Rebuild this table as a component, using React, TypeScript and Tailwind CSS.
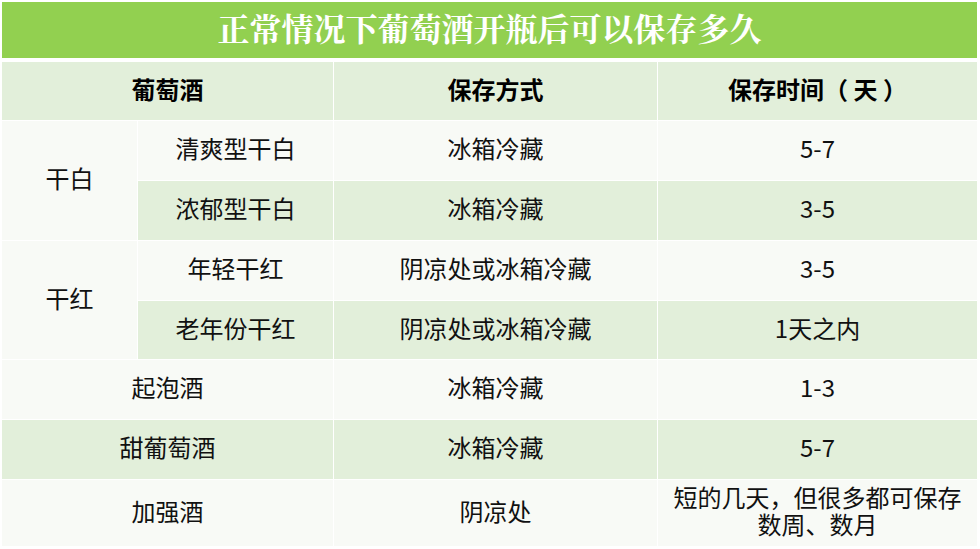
const body = "font-['Noto_Sans_CJK_SC',sans-serif]"

const cell = 'flex items-center justify-center text-center text-[24px] text-[#111] pb-[5px]'
const light = 'bg-[#f8faf6]'
const green = 'bg-[#e2efda]'

export default function App() {
  return (
    <div className={`w-[980px] h-[549px] bg-white pt-[2px] pl-[2px] ${body}`}>
      <div className="w-[975px] h-[56px] bg-[#92d050] flex items-center justify-center pb-[6px]">
        <h1 className="text-white text-[32px] font-bold font-['Noto_Serif_CJK_SC','Noto_Sans_CJK_SC',serif]">
          正常情况下葡萄酒开瓶后可以保存多久
        </h1>
      </div>

      <div className="mt-[4px] w-[975px] grid grid-cols-[135px_195px_323px_319px] grid-rows-[58px_59px_59px_59px_58px_59px_59px_66px] gap-px bg-white">
        {/* header */}
        <div className={`${cell} ${green} col-span-2 font-bold text-black`}>葡萄酒</div>
        <div className={`${cell} ${green} font-bold text-black`}>保存方式</div>
        <div className={`${cell} ${green} font-bold text-black`}>保存时间（ 天 ）</div>

        {/* 干白 */}
        <div className={`${cell} ${light} row-span-2`}>干白</div>
        <div className={`${cell} ${light}`}>清爽型干白</div>
        <div className={`${cell} ${light}`}>冰箱冷藏</div>
        <div className={`${cell} ${light}`}>5-7</div>
        <div className={`${cell} ${green}`}>浓郁型干白</div>
        <div className={`${cell} ${green}`}>冰箱冷藏</div>
        <div className={`${cell} ${green}`}>3-5</div>

        {/* 干红 */}
        <div className={`${cell} ${light} row-span-2`}>干红</div>
        <div className={`${cell} ${light}`}>年轻干红</div>
        <div className={`${cell} ${light}`}>阴凉处或冰箱冷藏</div>
        <div className={`${cell} ${light}`}>3-5</div>
        <div className={`${cell} ${green}`}>老年份干红</div>
        <div className={`${cell} ${green}`}>阴凉处或冰箱冷藏</div>
        <div className={`${cell} ${green}`}>1天之内</div>

        <div className={`${cell} ${light} col-span-2`}>起泡酒</div>
        <div className={`${cell} ${light}`}>冰箱冷藏</div>
        <div className={`${cell} ${light}`}>1-3</div>

        <div className={`${cell} ${green} col-span-2`}>甜葡萄酒</div>
        <div className={`${cell} ${green}`}>冰箱冷藏</div>
        <div className={`${cell} ${green}`}>5-7</div>

        <div className={`${cell} ${light} col-span-2`}>加强酒</div>
        <div className={`${cell} ${light}`}>阴凉处</div>
        <div className={`${cell} ${light} flex-col gap-[3px] leading-[24px]`}>
          <span>短的几天，但很多都可保存</span>
          <span>数周、数月</span>
        </div>
      </div>
    </div>
  )
}
